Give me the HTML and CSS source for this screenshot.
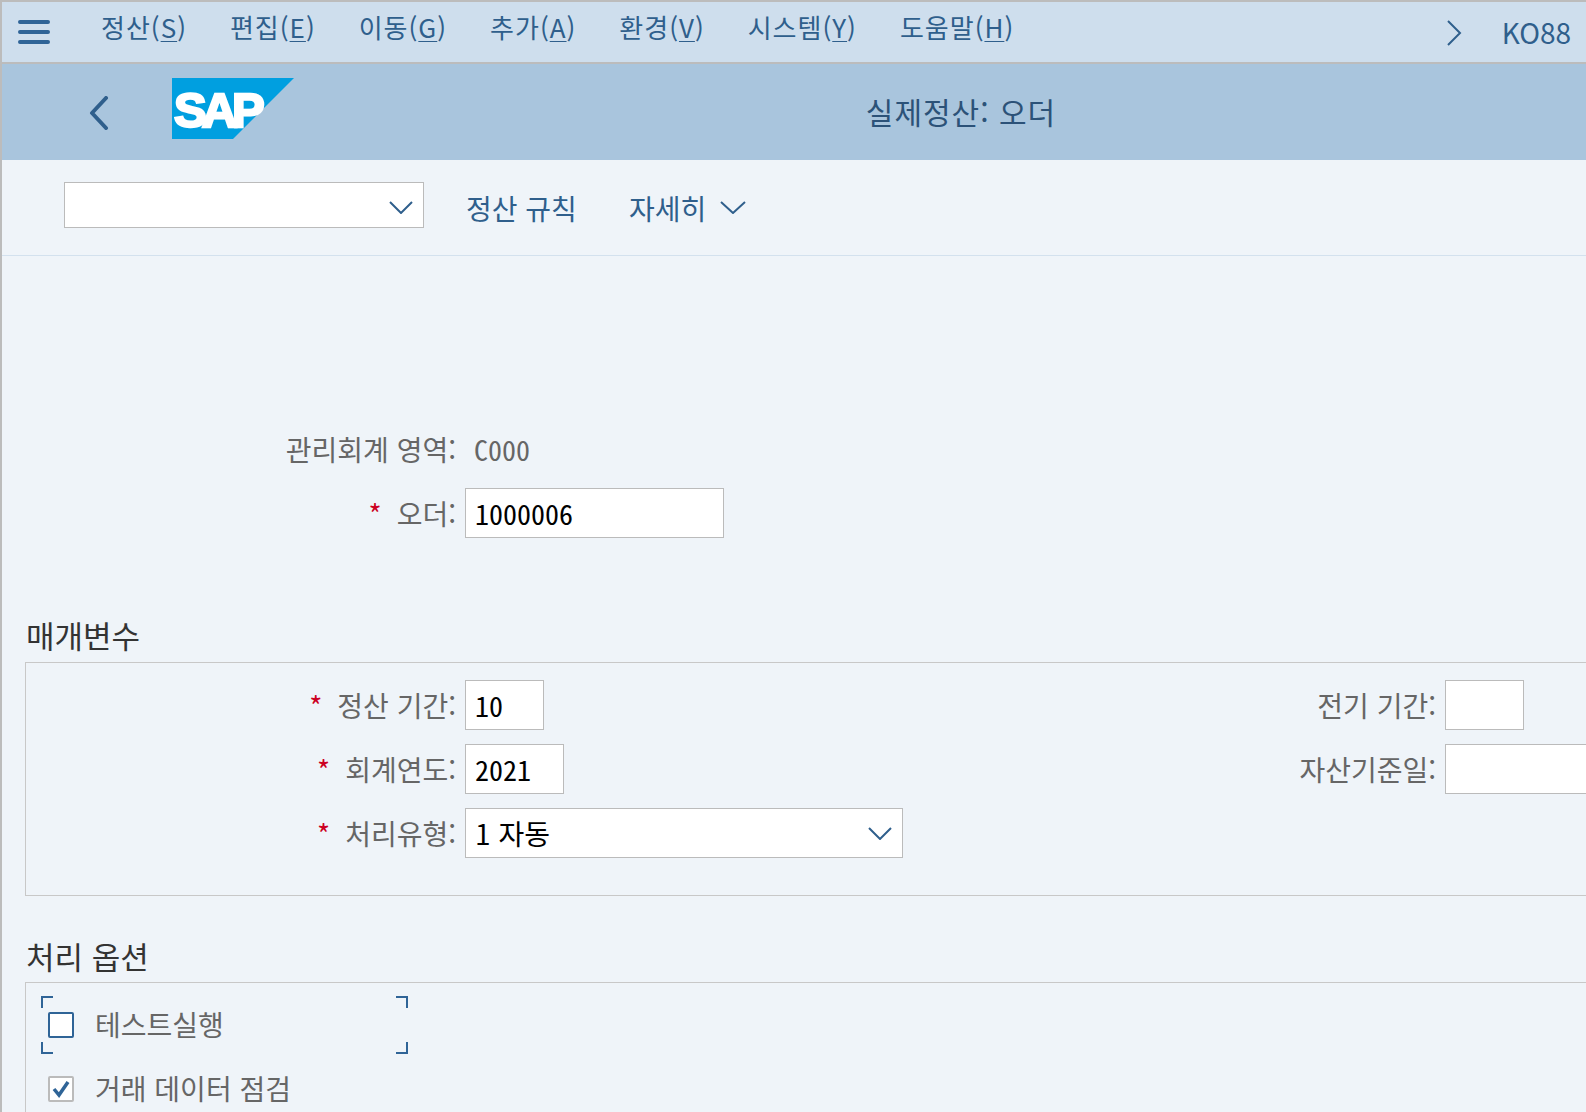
FILE: index.html
```html
<!DOCTYPE html>
<html lang="ko">

<head>
    <meta charset="UTF-8">
    <meta name="viewport" content="width=device-width, initial-scale=1.0">
    <title>실제정산: 오더</title>
    <link rel="stylesheet" href="styles.css">
</head>

<body>

    <!-- Menu bar -->
    <div class="menu-bar">
        <svg class="hamburger" width="32" height="24" viewBox="0 0 32 24">
            <path d="M2 2H30M2 12H30M2 22H30" />
        </svg>
        <nav class="menu-items">
            <span>정산(<u>S</u>)</span>
            <span>편집(<u>E</u>)</span>
            <span>이동(<u>G</u>)</span>
            <span>추가(<u>A</u>)</span>
            <span>환경(<u>V</u>)</span>
            <span>시스템(<u>Y</u>)</span>
            <span>도움말(<u>H</u>)</span>
        </nav>
        <svg class="menu-more" width="16" height="26" viewBox="0 0 16 26">
            <path d="M2 1L14 13L2 25" />
        </svg>
        <span class="tcode">KO88</span>
    </div>

    <!-- Title bar -->
    <div class="title-bar">
        <svg class="back" width="20" height="34" viewBox="0 0 20 34">
            <path d="M17 2L3 17L17 32" />
        </svg>
        <svg class="sap-logo" width="122" height="62" viewBox="0 0 122 62">
            <polygon points="0,0 122,0 61,61 0,61" />
            <text x="2" y="49">SAP</text>
        </svg>
        <h1>실제정산: 오더</h1>
    </div>

    <!-- Toolbar -->
    <div class="toolbar">
        <div class="tool-select">
            <svg class="chevron" width="24" height="13" viewBox="0 0 24 13">
                <path d="M1 1L12 12L23 1" />
            </svg>
        </div>
        <span class="tool-link rules">정산 규칙</span>
        <span class="tool-link more">자세히
            <svg class="chevron" width="26" height="13" viewBox="0 0 26 13">
                <path d="M1 1L13 12L25 1" />
            </svg>
        </span>
    </div>

    <div class="content">
        <div class="form-top">
            <div class="row">
                <label class="field-label">관리회계 영역:</label>
                <span class="mono readonly">C000</span>
            </div>
            <div class="row">
                <label class="field-label"><span class="req">*</span>오더:</label>
                <div class="input mono w-order">1000006</div>
            </div>
        </div>

        <h2 class="group-title params-title">매개변수</h2>
        <div class="group params">
            <div class="col-left">
                <div class="row">
                    <label class="field-label"><span class="req">*</span>정산 기간:</label>
                    <div class="input mono w-period">10</div>
                </div>
                <div class="row">
                    <label class="field-label"><span class="req">*</span>회계연도:</label>
                    <div class="input mono w-year">2021</div>
                </div>
                <div class="row">
                    <label class="field-label"><span class="req">*</span>처리유형:</label>
                    <div class="input w-type">1 자동
                        <svg class="chevron" width="24" height="13" viewBox="0 0 24 13">
                            <path d="M1 1L12 12L23 1" />
                        </svg>
                    </div>
                </div>
            </div>
            <div class="col-right">
                <div class="row">
                    <label class="field-label">전기 기간:</label>
                    <div class="input w-period"></div>
                </div>
                <div class="row">
                    <label class="field-label">자산기준일:</label>
                    <div class="input w-date"></div>
                </div>
            </div>
        </div>

        <h2 class="group-title options-title">처리 옵션</h2>
        <div class="group options">
            <div class="check-row focused">
                <span class="corner tl"></span>
                <span class="corner tr"></span>
                <span class="corner bl"></span>
                <span class="corner br"></span>
                <span class="checkbox active"></span>
                <span class="check-label">테스트실행</span>
            </div>
            <div class="check-row">
                <span class="checkbox">
                    <svg width="22" height="22" viewBox="0 0 22 22">
                        <path d="M4 11L9 17L18 4" />
                    </svg>
                </span>
                <span class="check-label">거래 데이터 점검</span>
            </div>
        </div>
    </div>

</body>

</html>
```

FILE: styles.css
```css
body {
    font-family: "Noto Sans CJK KR", "Noto Sans", sans-serif;
    background-color: #eff4f9;
    margin: 0;
    padding: 0;
    width: 1586px;
    height: 1112px;
    overflow: hidden;
    box-sizing: border-box;
    border-left: 2px solid #bcbcbc;
    color: #2f5f8c;
}

/* Menu bar */
.menu-bar {
    display: flex;
    height: 60px;
    background-color: #cedeed;
    border-top: 2px solid #bcbcbc;
    border-bottom: 2px solid #bcbcbc;
    font-size: 26px;
    line-height: 36px;
}

.hamburger {
    margin: 18px 0 0 16px;
}

.hamburger path {
    fill: none;
    stroke: #2f6497;
    stroke-width: 4;
    stroke-linecap: round;
}

.menu-items {
    display: flex;
    gap: 43px;
    margin-left: 51px;
    padding-top: 7px;
    letter-spacing: 1px;
}

.menu-items u {
    text-underline-offset: 3px;
    text-decoration-thickness: 1px;
}

.menu-more {
    margin: 18px 0 0 auto;
}

.menu-more path,
.back path,
.chevron path {
    fill: none;
    stroke: #2f5f8c;
    stroke-width: 2;
}

.tcode {
    font-size: 28px;
    margin: 12px 15px 0 40px;
}

/* Title bar */
.title-bar {
    display: flex;
    align-items: center;
    height: 96px;
    background-color: #a9c5dd;
}

.back {
    margin-left: 87px;
    margin-top: 2px;
}

.back path {
    stroke-width: 4;
    stroke-linecap: round;
    stroke-linejoin: round;
}

.sap-logo {
    margin-left: 63px;
    margin-bottom: 6px;
}

.sap-logo polygon {
    fill: #009fe0;
}

.sap-logo text {
    font-family: "Liberation Sans", sans-serif;
    font-weight: bold;
    font-size: 49px;
    letter-spacing: -5px;
    fill: #fff;
    stroke: #fff;
    stroke-width: 2.5;
}

.title-bar h1 {
    flex: 1;
    margin: 0;
    padding: 0 0 2px 42px;
    font-size: 30px;
    font-weight: normal;
    letter-spacing: 1px;
    color: #2c5278;
    text-align: center;
}

/* Toolbar */
.toolbar {
    display: flex;
    align-items: center;
    height: 89px;
    padding-bottom: 6px;
    border-bottom: 1px solid #d3e1ee;
    font-size: 28px;
}

.tool-select {
    display: flex;
    align-items: center;
    justify-content: flex-end;
    width: 360px;
    height: 46px;
    margin-left: 62px;
    padding-right: 10px;
    box-sizing: border-box;
    background-color: #fff;
    border: 1px solid #bbb;
}

.tool-select .chevron {
    margin-top: 6px;
}

.tool-link {
    padding-top: 6px;
}

.rules {
    margin-left: 42px;
}

.more {
    display: flex;
    align-items: center;
    gap: 14px;
    margin-left: 52px;
}

/* Form */
.content {
    font-size: 28px;
    color: #666;
}

.form-top {
    padding-top: 168px;
}

.row {
    display: flex;
    align-items: center;
    height: 50px;
    margin-bottom: 14px;
}

.field-label {
    width: 463px;
    padding-right: 9px;
    box-sizing: border-box;
    text-align: right;
    white-space: nowrap;
}

.req {
    color: #cc0022;
    margin-right: 15px;
}

.mono {
    font-family: "Noto Sans Mono CJK KR", "DejaVu Sans Mono", monospace;
    font-size: 28px;
}

.readonly {
    padding-left: 9px;
    color: #666;
}

.input {
    display: flex;
    align-items: center;
    height: 50px;
    padding-left: 9px;
    box-sizing: border-box;
    background-color: #fff;
    border: 1px solid #bbb;
    color: #000;
}

.w-order {
    width: 259px;
}

.w-period {
    width: 79px;
}

.w-year {
    width: 99px;
}

.w-type {
    width: 438px;
    justify-content: space-between;
    padding-right: 10px;
}

.w-date {
    width: 160px;
}

/* Groups */
.group-title {
    margin: 0;
    padding-left: 24px;
    font-size: 31px;
    font-weight: normal;
    line-height: 44px;
    color: #333;
}

.params-title {
    margin-top: 75px;
    margin-bottom: 5px;
}

.options-title {
    margin-top: 38px;
    margin-bottom: 4px;
}

.group {
    width: 1600px;
    margin-left: 23px;
    box-sizing: border-box;
    border: 1px solid #c8c8c8;
}

.params {
    display: flex;
    height: 234px;
    padding-top: 17px;
}

.params .field-label {
    width: 439px;
}

.col-left {
    width: 900px;
}

.col-right .field-label {
    width: 519px;
}

.options {
    height: 200px;
    padding-top: 13px;
}

.check-row {
    position: relative;
    display: flex;
    align-items: center;
    width: 367px;
    height: 58px;
    margin: 0 0 6px 15px;
}

.corner {
    position: absolute;
    width: 10px;
    height: 10px;
    border: 0 solid #2f6497;
}

.tl {
    top: 0;
    left: 0;
    border-width: 2px 0 0 2px;
}

.tr {
    top: 0;
    right: 0;
    border-width: 2px 2px 0 0;
}

.bl {
    bottom: 0;
    left: 0;
    border-width: 0 0 2px 2px;
}

.br {
    bottom: 0;
    right: 0;
    border-width: 0 2px 2px 0;
}

.checkbox {
    display: flex;
    align-items: center;
    justify-content: center;
    width: 26px;
    height: 26px;
    margin-left: 7px;
    box-sizing: border-box;
    background-color: #fff;
    border: 2px solid #bbb;
    border-radius: 2px;
}

.checkbox.active {
    border-color: #2f6497;
}

.checkbox path {
    fill: none;
    stroke: #2f6497;
    stroke-width: 3.5;
}

.check-label {
    margin-left: 21px;
    margin-bottom: 2px;
}
```
